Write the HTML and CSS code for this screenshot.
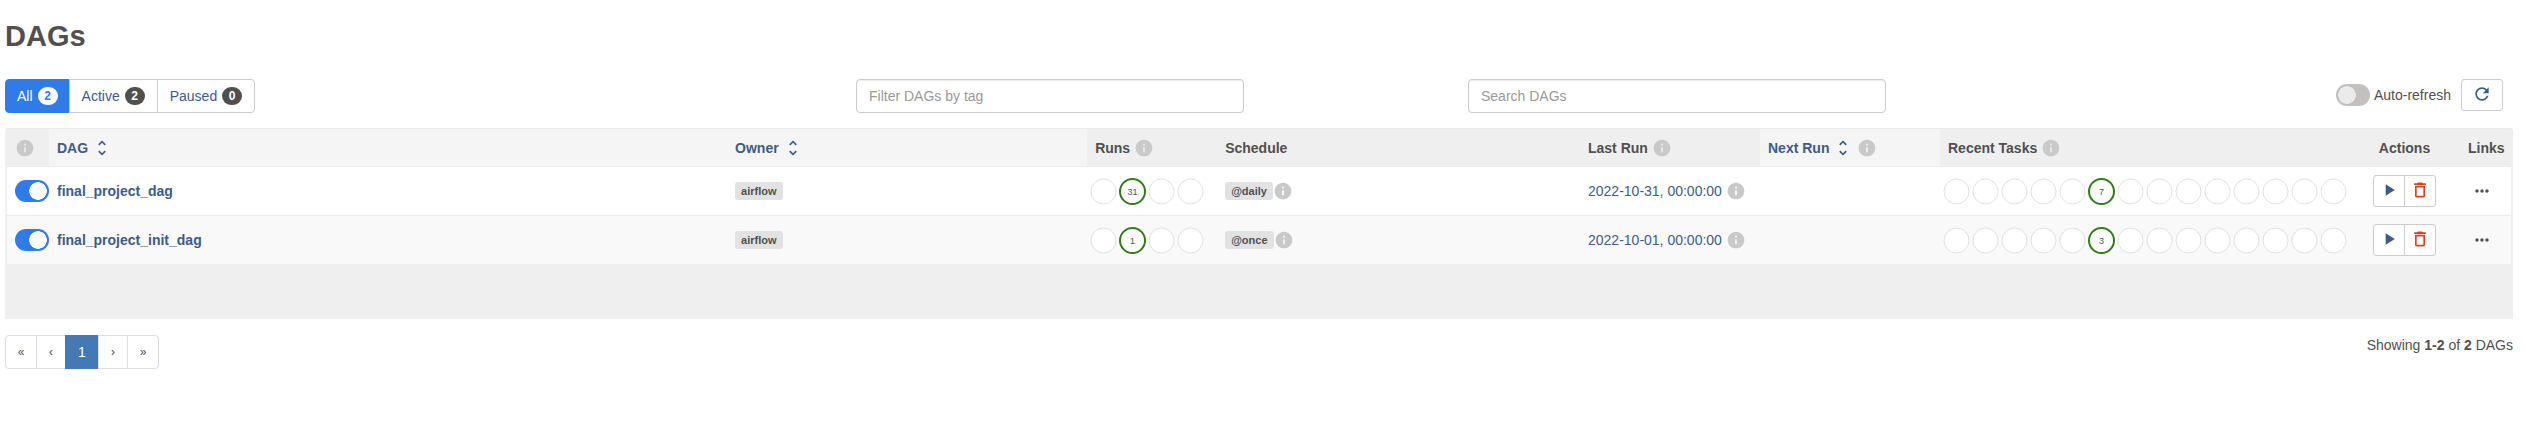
FILE: index.html
```html
<!DOCTYPE html>
<html lang="en">
<head>
<meta charset="utf-8">
<title>DAGs - Airflow</title>
<link rel="stylesheet" href="styles.css">
</head>
<body>
<svg class="defs" aria-hidden="true">
  <symbol id="info" viewBox="0 0 24 24"><path d="M12 2C6.48 2 2 6.48 2 12s4.48 10 10 10 10-4.48 10-10S17.52 2 12 2zm1 15h-2v-6h2v6zm0-8h-2V7h2v2z"/></symbol>
  <symbol id="sort" viewBox="0 0 24 24"><path d="M12 5.83L15.17 9l1.41-1.41L12 3 7.41 7.59 8.83 9 12 5.83zm0 12.34L8.83 15l-1.41 1.41L12 21l4.59-4.59L15.17 15 12 18.17z"/></symbol>
  <symbol id="play" viewBox="0 0 24 24"><path d="M8 5v14l11-7z"/></symbol>
  <symbol id="trash" viewBox="0 0 24 24"><path d="M6 19c0 1.1.9 2 2 2h8c1.1 0 2-.9 2-2V7H6v12zM8 9h8v10H8V9zm7.5-5l-1-1h-5l-1 1H5v2h14V4h-3.5z"/></symbol>
  <symbol id="more" viewBox="0 0 24 24"><path d="M6 10c-1.1 0-2 .9-2 2s.9 2 2 2 2-.9 2-2-.9-2-2-2zm12 0c-1.1 0-2 .9-2 2s.9 2 2 2 2-.9 2-2-.9-2-2-2zm-6 0c-1.1 0-2 .9-2 2s.9 2 2 2 2-.9 2-2-.9-2-2-2z"/></symbol>
  <symbol id="refresh" viewBox="0 0 24 24"><path d="M17.65 6.35C16.2 4.9 14.21 4 12 4c-4.42 0-7.99 3.58-7.99 8s3.57 8 7.99 8c3.73 0 6.84-2.55 7.73-6h-2.08c-.82 2.33-3.04 4-5.65 4-3.31 0-6-2.69-6-6s2.69-6 6-6c1.66 0 3.14.69 4.22 1.78L13 11h7V4l-2.35 2.35z"/></symbol>
  <symbol id="ring" viewBox="0 0 29 29"><circle cx="14.5" cy="14.5" r="12.5"/></symbol>
</svg>
<main class="page">
  <h2 class="title">DAGs</h2>

  <div class="toolbar">
    <nav class="filters" aria-label="DAG status">
      <a class="filter filter-on" href="#all">All <span class="count">2</span></a>
      <a class="filter" href="#active">Active <span class="count">2</span></a>
      <a class="filter" href="#paused">Paused <span class="count">0</span></a>
    </nav>
    <input class="field tag-field" type="text" placeholder="Filter DAGs by tag" aria-label="Filter DAGs by tag">
    <input class="field search-field" type="text" placeholder="Search DAGs" aria-label="Search DAGs">
    <div class="refresh">
      <label class="auto"><input class="switch" type="checkbox"> Auto-refresh</label>
      <button class="btn refresh-btn" type="button" aria-label="Refresh"><svg class="icon"><use href="#refresh"/></svg></button>
    </div>
  </div>

  <div class="table-wrap">
    <table class="dags">
      <colgroup>
        <col class="c-toggle"><col class="c-dag"><col class="c-owner"><col class="c-runs"><col class="c-schedule">
        <col class="c-date"><col class="c-date"><col class="c-tasks"><col class="c-actions"><col class="c-links">
      </colgroup>
      <thead>
        <tr>
          <th><span class="line"><svg class="icon info"><use href="#info"/></svg></span></th>
          <th class="sortable"><a class="line" href="#sort-dag">DAG <svg class="icon"><use href="#sort"/></svg></a></th>
          <th class="sortable"><a class="line" href="#sort-owner">Owner <svg class="icon"><use href="#sort"/></svg></a></th>
          <th><span class="line">Runs <svg class="icon info"><use href="#info"/></svg></span></th>
          <th>Schedule</th>
          <th><span class="line">Last Run <svg class="icon info"><use href="#info"/></svg></span></th>
          <th class="sortable"><span class="line"><a class="line" href="#sort-next">Next Run <svg class="icon"><use href="#sort"/></svg></a><svg class="icon info"><use href="#info"/></svg></span></th>
          <th><span class="line">Recent Tasks <svg class="icon info"><use href="#info"/></svg></span></th>
          <th class="center">Actions</th>
          <th class="center">Links</th>
        </tr>
      </thead>
      <tbody>
        <tr>
          <td class="toggle-cell"><input class="switch" type="checkbox" checked aria-label="Pause final_project_dag"></td>
          <td><a class="dag-name" href="#final_project_dag">final_project_dag</a></td>
          <td><span class="line"><a class="label" href="#airflow">airflow</a></span></td>
          <td class="rings-cell"><div class="rings">
            <svg class="ring"><use href="#ring"/></svg><svg class="ring ok"><use href="#ring"/><text x="50%" y="18">31</text></svg><svg class="ring"><use href="#ring"/></svg><svg class="ring"><use href="#ring"/></svg>
          </div></td>
          <td><span class="line schedule"><a class="label" href="#daily">@daily</a><svg class="icon info"><use href="#info"/></svg></span></td>
          <td><span class="line"><a href="#run-1">2022-10-31, 00:00:00</a><svg class="icon info"><use href="#info"/></svg></span></td>
          <td></td>
          <td class="rings-cell"><div class="rings">
            <svg class="ring"><use href="#ring"/></svg><svg class="ring"><use href="#ring"/></svg><svg class="ring"><use href="#ring"/></svg><svg class="ring"><use href="#ring"/></svg><svg class="ring"><use href="#ring"/></svg><svg class="ring ok"><use href="#ring"/><text x="50%" y="18">7</text></svg><svg class="ring"><use href="#ring"/></svg><svg class="ring"><use href="#ring"/></svg><svg class="ring"><use href="#ring"/></svg><svg class="ring"><use href="#ring"/></svg><svg class="ring"><use href="#ring"/></svg><svg class="ring"><use href="#ring"/></svg><svg class="ring"><use href="#ring"/></svg><svg class="ring"><use href="#ring"/></svg>
          </div></td>
          <td><div class="actions">
            <button class="btn" type="button" aria-label="Trigger DAG"><svg class="icon"><use href="#play"/></svg></button>
            <button class="btn danger" type="button" aria-label="Delete DAG"><svg class="icon"><use href="#trash"/></svg></button>
          </div></td>
          <td class="links-cell"><button class="more" type="button" aria-label="Links"><svg class="icon"><use href="#more"/></svg></button></td>
        </tr>
        <tr>
          <td class="toggle-cell"><input class="switch" type="checkbox" checked aria-label="Pause final_project_init_dag"></td>
          <td><a class="dag-name" href="#final_project_init_dag">final_project_init_dag</a></td>
          <td><span class="line"><a class="label" href="#airflow">airflow</a></span></td>
          <td class="rings-cell"><div class="rings">
            <svg class="ring"><use href="#ring"/></svg><svg class="ring ok"><use href="#ring"/><text x="50%" y="18">1</text></svg><svg class="ring"><use href="#ring"/></svg><svg class="ring"><use href="#ring"/></svg>
          </div></td>
          <td><span class="line schedule"><a class="label" href="#once">@once</a><svg class="icon info"><use href="#info"/></svg></span></td>
          <td><span class="line"><a href="#run-2">2022-10-01, 00:00:00</a><svg class="icon info"><use href="#info"/></svg></span></td>
          <td></td>
          <td class="rings-cell"><div class="rings">
            <svg class="ring"><use href="#ring"/></svg><svg class="ring"><use href="#ring"/></svg><svg class="ring"><use href="#ring"/></svg><svg class="ring"><use href="#ring"/></svg><svg class="ring"><use href="#ring"/></svg><svg class="ring ok"><use href="#ring"/><text x="50%" y="18">3</text></svg><svg class="ring"><use href="#ring"/></svg><svg class="ring"><use href="#ring"/></svg><svg class="ring"><use href="#ring"/></svg><svg class="ring"><use href="#ring"/></svg><svg class="ring"><use href="#ring"/></svg><svg class="ring"><use href="#ring"/></svg><svg class="ring"><use href="#ring"/></svg><svg class="ring"><use href="#ring"/></svg>
          </div></td>
          <td><div class="actions">
            <button class="btn" type="button" aria-label="Trigger DAG"><svg class="icon"><use href="#play"/></svg></button>
            <button class="btn danger" type="button" aria-label="Delete DAG"><svg class="icon"><use href="#trash"/></svg></button>
          </div></td>
          <td class="links-cell"><button class="more" type="button" aria-label="Links"><svg class="icon"><use href="#more"/></svg></button></td>
        </tr>
      </tbody>
    </table>
  </div>

  <footer class="footer">
    <nav class="pager" aria-label="Pages">
      <a class="page-link" href="#first">«</a>
      <a class="page-link" href="#prev">‹</a>
      <a class="page-link page-on" href="#1">1</a>
      <a class="page-link" href="#next">›</a>
      <a class="page-link" href="#last">»</a>
    </nav>
    <p class="showing">Showing <strong>1-2</strong> of <strong>2</strong> DAGs</p>
  </footer>
</main>
</body>
</html>
```

FILE: styles.css
```css
* {
  box-sizing: border-box;
}

body {
  margin: 0;
  background: #fff;
  color: #51504f;
  font: 14px/20px "Liberation Sans", Arial, sans-serif;
}

a {
  color: #3d5c86;
  text-decoration: none;
}

.defs {
  display: none;
}

.page {
  padding: 20px 13px 0 5px;
}

.title {
  margin: 0 0 26px;
  font-size: 29px;
  line-height: 33px;
  font-weight: bold;
}

.icon {
  display: block;
  flex: none;
  width: 20px;
  height: 20px;
  fill: currentColor;
}

.info {
  color: #c9c9c9;
}

/* Toolbar */
.toolbar {
  display: grid;
  grid-template-columns: 851fr 388fr 224fr 418fr 627fr;
  align-items: start;
  margin-bottom: 15px;
}

.filters {
  display: flex;
}

.filter {
  display: flex;
  align-items: center;
  gap: 5px;
  height: 34px;
  margin-left: -1px;
  padding: 0 12px;
  border: 1px solid #ccc;
}

.filter:first-child {
  margin-left: 0;
  padding: 0 11px;
  border-radius: 4px 0 0 4px;
}

.filter:last-child {
  border-radius: 0 4px 4px 0;
}

.filter-on {
  border-color: #2f7bea;
  background: #2f7bea;
  color: #fff;
}

.count {
  min-width: 20px;
  border-radius: 9px;
  background: #51504f;
  color: #fff;
  font-size: 12px;
  line-height: 18px;
  font-weight: bold;
  text-align: center;
}

.filter-on .count {
  background: #fff;
  color: #2f7bea;
}

.field {
  width: 100%;
  height: 34px;
  padding: 0 12px;
  border: 1px solid #ccc;
  border-radius: 4px;
  box-shadow: inset 0 1px 1px rgba(0, 0, 0, 0.08);
  color: #51504f;
  font: inherit;
}

.field::placeholder {
  color: #999;
}

.search-field {
  grid-column: 4;
}

.refresh {
  display: flex;
  justify-content: flex-end;
  gap: 10px;
  padding-right: 10px;
}

.auto {
  display: flex;
  align-items: center;
  gap: 4px;
  height: 32px;
}

.switch {
  appearance: none;
  display: block;
  flex: none;
  width: 34px;
  height: 22px;
  margin: 0;
  border-radius: 11px;
  background: radial-gradient(circle 9px at 11px 11px, #ebebeb 95%, transparent) #c2c1c0;
}

.switch:checked {
  background: radial-gradient(circle 9px at 23px 11px, #fff 95%, transparent) #2f7bea;
}

.btn {
  display: flex;
  justify-content: center;
  width: 32px;
  height: 32px;
  padding: 4px 0;
  border: 1px solid #ccc;
  border-radius: 3px;
  background: #fff;
  color: #3d5c86;
}

.refresh-btn {
  width: 42px;
}

/* Table */
.table-wrap {
  padding: 0 2px 55px;
  border-radius: 3px 3px 0 0;
  background: #efefef;
}

.dags {
  width: 100%;
  border-spacing: 0;
  table-layout: fixed;
}

.c-toggle { width: 42px; }
.c-dag { width: 27.08%; }
.c-owner { width: 14.38%; }
.c-runs { width: 130px; }
.c-date { width: 180px; }
.c-tasks { width: 409px; }
.c-actions { width: 111px; }
.c-links { width: 51px; }

.dags th,
.dags td {
  padding: 0 8px;
  text-align: left;
  vertical-align: middle;
}

.dags th {
  height: 39px;
  border-top: 1px solid #eaeaea;
  border-bottom: 1px solid #ebebeb;
}

.dags .sortable {
  background: #f5f5f5;
}

.dags td {
  height: 49px;
  border-bottom: 1px solid #ebebeb;
  background: #fff;
}

.dags tr:nth-child(even) td {
  background: #f9f9f9;
}

.dags tr:last-child td {
  height: 48px;
  border-bottom: 0;
}

.dags .center {
  text-align: center;
}

.dags .toggle-cell {
  padding-right: 0;
}

.dags .rings-cell {
  padding: 0 2px;
}

.dags .links-cell {
  padding-left: 0;
}

.line {
  display: flex;
  align-items: center;
  gap: 4px;
}

.schedule {
  gap: 0;
}

.dag-name {
  font-weight: bold;
}

.label {
  padding: 0 6px;
  border-radius: 3px;
  background: #e2e2e2;
  color: #51504f;
  font-size: 11px;
  line-height: 18px;
  font-weight: bold;
}

.rings {
  display: flex;
}

.ring {
  flex: none;
  width: 29px;
  height: 29px;
  fill: #fff;
  stroke: #e0e0e0;
  stroke-width: 1px;
}

.ok {
  stroke: #2e7d16;
  stroke-width: 2px;
}

.ring text {
  fill: #51504f;
  stroke: none;
  font-size: 9px;
  text-anchor: middle;
}

.actions {
  display: flex;
  justify-content: center;
}

.actions .btn:first-child {
  border-radius: 3px 0 0 3px;
}

.actions .btn:last-child {
  margin-left: -1px;
  border-radius: 0 3px 3px 0;
}

.danger {
  color: #db4025;
}

.more {
  display: block;
  margin: 0 auto;
  padding: 0;
  border: 0;
  background: none;
  color: #51504f;
}

/* Footer */
.footer {
  display: flex;
  justify-content: space-between;
  align-items: flex-start;
  padding-top: 16px;
}

.pager {
  display: flex;
}

.page-link {
  min-width: 30px;
  height: 34px;
  margin-left: -1px;
  padding: 0 11px;
  border: 1px solid #ddd;
  color: #51504f;
  font-size: 12px;
  line-height: 32px;
  text-align: center;
}

.page-link:first-child {
  min-width: 32px;
  margin-left: 0;
  border-radius: 4px 0 0 4px;
}

.page-link:last-child {
  min-width: 32px;
  border-radius: 0 4px 4px 0;
}

.page-on {
  min-width: 34px;
  border-color: #4479b3;
  background: #4479b3;
  color: #fff;
  font-size: 14px;
}

.showing {
  margin: 0;
}
```
